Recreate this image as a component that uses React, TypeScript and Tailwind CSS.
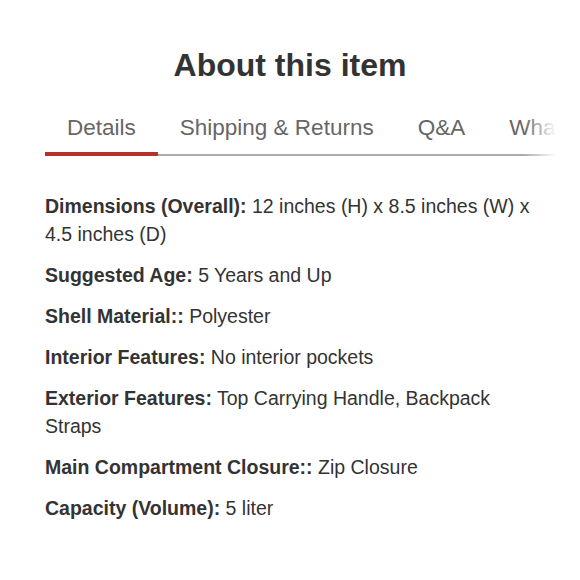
const tabs = ['Details', 'Shipping & Returns', 'Q&A', "What's in the box"]

const specs = [
  { label: 'Dimensions (Overall):', value: '12 inches (H) x 8.5 inches (W) x 4.5 inches (D)' },
  { label: 'Suggested Age:', value: '5 Years and Up' },
  { label: 'Shell Material::', value: 'Polyester' },
  { label: 'Interior Features:', value: 'No interior pockets' },
  { label: 'Exterior Features:', value: 'Top Carrying Handle, Backpack Straps' },
  { label: 'Main Compartment Closure::', value: 'Zip Closure' },
  { label: 'Capacity (Volume):', value: '5 liter' },
]

export default function App() {
  return (
    <div className="w-[580px] h-[580px] bg-white font-['Liberation_Sans',Arial,sans-serif] text-[#333]">
      <h2 className="pt-[45px] text-center text-[32px] leading-[40px] font-bold">About this item</h2>

      {/* Tabs */}
      <div className="relative mt-[29px] ml-[45px] mr-[24px] overflow-hidden">
        <div className="flex whitespace-nowrap border-b-2 border-[#acacac]">
          {tabs.map((tab, i) => (
            <div
              key={tab}
              className={
                i === 0
                  ? 'px-[22px] pb-[10px] -mb-[2px] border-b-4 border-[#b8302a] text-[22.5px] leading-[28px] text-[#666]'
                  : 'px-[22px] pb-[10px] text-[22.5px] leading-[28px] text-[#666]'
              }
            >
              {tab}
            </div>
          ))}
        </div>
        <div className="absolute right-0 top-0 bottom-0 w-[32px] bg-linear-to-r from-white/0 to-white" />
      </div>

      {/* Specs */}
      <div className="mt-[36px] px-[45px] flex flex-col gap-[13px] text-[19.5px] leading-[28px]">
        {specs.map(s => (
          <p key={s.label}>
            <span className="font-bold">{s.label}</span> {s.value}
          </p>
        ))}
      </div>
    </div>
  )
}
